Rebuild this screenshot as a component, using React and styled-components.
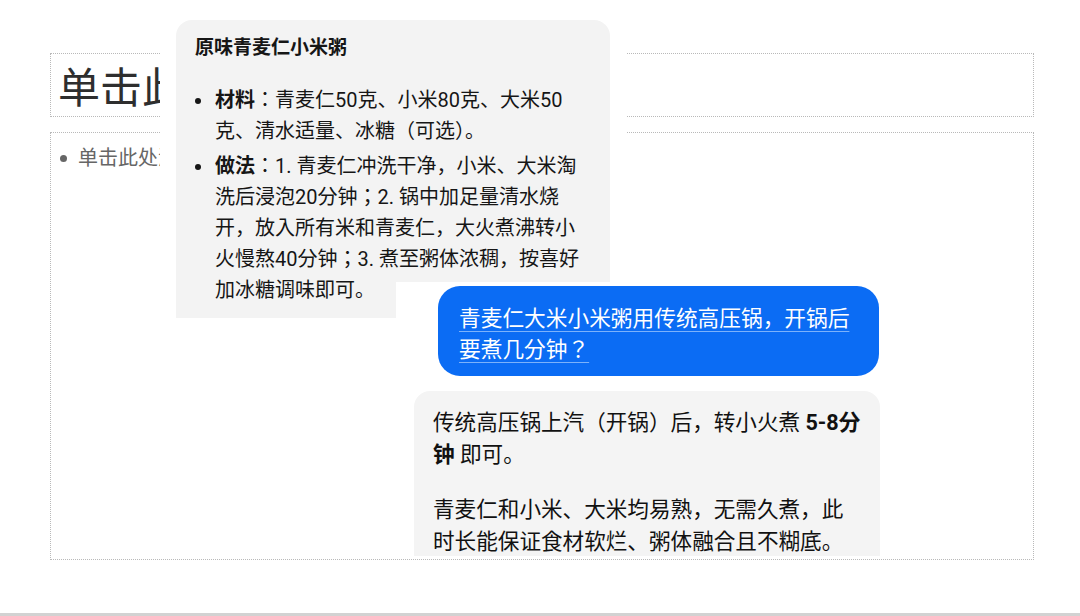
import React from 'react';
import styled, { createGlobalStyle } from 'styled-components';

const GlobalStyle = createGlobalStyle`
    html, body {
        margin: 0;
        padding: 0;
        background: #ffffff;
    }
    body {
        font-family: Roboto, "Noto Sans CJK JP", sans-serif;
    }
`

const Screen = styled.div`
    position: relative;
    width: 1080px;
    height: 616px;
    display: flex;
    flex-direction: column;
    overflow: hidden;
    background: #fdfdfd;
`
const Slide = styled.div`
    flex: 1;
    display: flex;
    flex-direction: column;
    gap: 15px;
    padding: 53px 46px 0 50px;
    background: #ffffff;
`
const Placeholder = styled.div`
    box-sizing: border-box;
    height: ${props => props.height}px;
    border: 1px dotted #b9b9b9;
`
const TitleText = styled.div`
    padding-left: 7px;
    font-family: "Noto Sans CJK SC", sans-serif;
    font-size: 42px;
    line-height: 61px;
    color: #2e2e2e;
`
const BodyText = styled.ul`
    margin: 0;
    padding: 9px 0 0 27px;
    list-style: none;
    li {
        position: relative;
        font-family: "Noto Sans CJK SC", sans-serif;
        font-size: 20px;
        line-height: 30px;
        color: #666666;
    }
    li::before {
        content: '';
        position: absolute;
        left: -18px;
        top: 13px;
        width: 7px;
        height: 7px;
        border-radius: 50%;
        background: #666666;
    }
`
const BottomBar = styled.div`
    height: 3px;
    background: #d2d2d2;
`

/* pasted chat snippets lying over the slide */
const RecipeSnip = styled.div`
    position: absolute;
    left: 160px;
    top: 0;
    width: 466px;
    box-sizing: border-box;
    padding: 20px 16px 0 16px;
    background: #ffffff;
`
const RecipeBubble = styled.div`
    height: 298px;
    box-sizing: border-box;
    padding: 14px 24px 0 19px;
    background: #f3f3f3;
    border-radius: 16px 16px 0 0;
    clip-path: polygon(0 0, 100% 0, 100% 262px, 220px 262px, 220px 100%, 0 100%);
    color: #161616;
    font-family: Roboto, "Noto Sans CJK JP", sans-serif;
`
const RecipeTitle = styled.div`
    font-size: 19px;
    font-weight: 700;
    line-height: 28px;
`
const RecipeList = styled.ul`
    margin: 23px 0 0 0;
    padding: 0 0 0 20px;
    list-style: none;
    li {
        position: relative;
        font-size: 20px;
        line-height: 31px;
        margin-bottom: 4px;
    }
    li::before {
        content: '';
        position: absolute;
        left: -20px;
        top: 13px;
        width: 6px;
        height: 6px;
        border-radius: 50%;
        background: #161616;
    }
    b {
        font-weight: 700;
    }
`
const QuestionBubble = styled.div`
    position: absolute;
    left: 438px;
    top: 286px;
    width: 441px;
    height: 90px;
    box-sizing: border-box;
    padding: 15px 18px 0 21px;
    background: #0b6cf4;
    border-radius: 22px;
    color: #ffffff;
    font-family: "Noto Sans CJK JP", sans-serif;
    font-size: 21.7px;
    line-height: 31px;
    span {
        text-decoration: underline;
        text-decoration-color: rgba(200, 225, 255, 0.6);
        text-decoration-thickness: 1px;
        text-underline-offset: 5px;
    }
`
const AnswerBubble = styled.div`
    position: absolute;
    left: 414px;
    top: 391px;
    width: 466px;
    height: 165px;
    box-sizing: border-box;
    padding: 16px 18px 0 19px;
    overflow: hidden;
    background: #f4f4f4;
    border-radius: 16px 16px 0 0;
    color: #111111;
    font-family: Roboto, "Noto Sans CJK JP", sans-serif;
    font-size: 21.6px;
    line-height: 32px;
    p {
        margin: 0 0 23px 0;
    }
    b {
        font-weight: 700;
    }
`

const App = () => {
    return(
        <Screen>
            <GlobalStyle />
            <Slide>
                <Placeholder height={64}>
                    <TitleText>单击此处添加标题</TitleText>
                </Placeholder>
                <Placeholder height={428}>
                    <BodyText>
                        <li>单击此处添加文本</li>
                    </BodyText>
                </Placeholder>
            </Slide>
            <BottomBar />

            <RecipeSnip>
                <RecipeBubble>
                    <RecipeTitle>原味青麦仁小米粥</RecipeTitle>
                    <RecipeList>
                        <li><b>材料</b>：青麦仁50克、小米80克、大米50克、清水适量、冰糖（可选）。</li>
                        <li><b>做法</b>：1. 青麦仁冲洗干净，小米、大米淘洗后浸泡20分钟；2. 锅中加足量清水烧开，放入所有米和青麦仁，大火煮沸转小火慢熬40分钟；3. 煮至粥体浓稠，按喜好加冰糖调味即可。</li>
                    </RecipeList>
                </RecipeBubble>
            </RecipeSnip>

            <QuestionBubble>
                <span>青麦仁大米小米粥用传统高压锅，开锅后要煮几分钟？</span>
            </QuestionBubble>

            <AnswerBubble>
                <p>传统高压锅上汽（开锅）后，转小火煮 <b>5-8分钟</b> 即可。</p>
                <p>青麦仁和小米、大米均易熟，无需久煮，此时长能保证食材软烂、粥体融合且不糊底。</p>
            </AnswerBubble>
        </Screen>
    )
}

export default App;
